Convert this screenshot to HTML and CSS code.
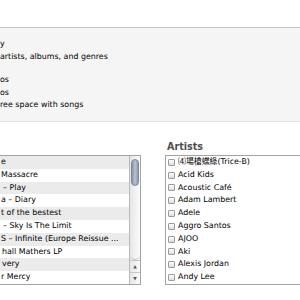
FILE: index.html
```html
<!DOCTYPE html>
<html>
<head>
<meta charset="utf-8">
<link rel="stylesheet" href="styles.css">
</head>
<body>
<div class="top"></div>
<div class="panel">
  <div class="group">
    <div class="line">y</div>
    <div class="line">artists, albums, and genres</div>
  </div>
  <div class="group group2">
    <div class="line">os</div>
    <div class="line">os</div>
    <div class="line">ree space with songs</div>
  </div>
</div>
<div class="lists">
  <div class="col col-left">
    <div class="heading"></div>
    <div class="listbox left-box">
      <div class="rows">
        <div class="row">e</div>
        <div class="row">Massacre</div>
        <div class="row pad2">– Play</div>
        <div class="row">a – Diary</div>
        <div class="row">t of the bestest</div>
        <div class="row pad2">– Sky Is The Limit</div>
        <div class="row">S – Infinite (Europe Reissue ...</div>
        <div class="row pad1">hall Mathers LP</div>
        <div class="row pad1">very</div>
        <div class="row">r Mercy</div>
      </div>
      <div class="scrollbar">
        <div class="track"><div class="thumb"></div></div>
        <div class="arrow">&#9650;</div>
        <div class="arrow">&#9660;</div>
      </div>
    </div>
  </div>
  <div class="col col-right">
    <div class="heading"><span class="title">Artists</span></div>
    <div class="listbox right-box">
      <div class="crow"><span class="cb"></span>⑷場槍蝶綠(Trice-B)</div>
      <div class="crow"><span class="cb"></span>Acid Kids</div>
      <div class="crow"><span class="cb"></span>Acoustic Café</div>
      <div class="crow"><span class="cb"></span>Adam Lambert</div>
      <div class="crow"><span class="cb"></span>Adele</div>
      <div class="crow"><span class="cb"></span>Aggro Santos</div>
      <div class="crow"><span class="cb"></span>AJOO</div>
      <div class="crow"><span class="cb"></span>Aki</div>
      <div class="crow"><span class="cb"></span>Alexis Jordan</div>
      <div class="crow"><span class="cb"></span>Andy Lee</div>
    </div>
  </div>
</div>
</body>
</html>
```
FILE: styles.css
```css
html, body {
  margin: 0;
  padding: 0;
  width: 300px;
  height: 300px;
  overflow: hidden;
  background: #fff;
  font-family: "DejaVu Sans", "Noto Sans CJK TC", sans-serif;
  font-size: 7.9px;
  color: #000;
}

.top {
  height: 27px;
  background: #fff;
  border-bottom: 1px solid #c4c4c4;
}

.panel {
  height: 94px;
  background: #f5f5f5;
  border-bottom: 1px solid #e2e2e2;
  padding-top: 9px;
  box-sizing: border-box;
}

.line {
  line-height: 13px;
  white-space: nowrap;
}

.group2 {
  margin-top: 11px;
}

.group2 .line {
  line-height: 12.6px;
}

.lists {
  display: flex;
  gap: 24px;
}

.col {
  display: flex;
  flex-direction: column;
}

.col-left {
  margin-left: -10px;
  width: 151px;
  flex: none;
}

.col-right {
  flex: 1;
  min-width: 160px;
}

.heading {
  height: 33px;
  display: flex;
  align-items: flex-end;
  padding-bottom: 2px;
  box-sizing: border-box;
}

.title {
  font-weight: bold;
  font-size: 9.6px;
  line-height: 12px;
  color: #4e4e4e;
  padding-left: 2px;
}

.listbox {
  border: 1px solid #a3a3a3;
  height: 130px;
  box-sizing: border-box;
  background: #fff;
}

.left-box {
  display: flex;
}

.rows {
  flex: 1;
  padding-left: 10px;
  margin-left: -10px;
}

.row {
  height: 12.8px;
  line-height: 12.8px;
  white-space: nowrap;
  overflow: hidden;
  padding-left: 10px;
  background: #fff;
}

.row:nth-child(odd) {
  background: #ebebeb;
}

.pad1 { padding-left: 11px; }
.pad2 { padding-left: 12px; }

.scrollbar {
  width: 10px;
  flex: none;
  display: flex;
  flex-direction: column;
  border-left: 1px solid #b9b9b9;
  background: linear-gradient(to right, #e6e6e6, #fbfbfb);
}

.track {
  flex: 1;
  padding: 3px 1px 0 1px;
  border-bottom: 1px solid #c0c0c0;
  border-radius: 0 0 5px 5px;
}

.thumb {
  height: 27px;
  border-radius: 4px;
  background: linear-gradient(to right, #8792a8, #b9c2d3 50%, #8f9ab0);
  border: 1px solid #7d879c;
  box-sizing: border-box;
}

.arrow {
  height: 11px;
  font-size: 4.5px;
  line-height: 11px;
  text-align: center;
  color: #555;
  border-top: 1px solid #c8c8c8;
}

.right-box {
  border-right: none;
}

.crow {
  height: 12.8px;
  line-height: 12.8px;
  display: flex;
  align-items: center;
  white-space: nowrap;
  padding-left: 2px;
  gap: 3px;
}

.cb {
  width: 7px;
  height: 7px;
  box-sizing: border-box;
  border: 1px solid #9a9a9a;
  border-radius: 1px;
  background: linear-gradient(#ffffff, #dedede);
  flex: none;
}
```
